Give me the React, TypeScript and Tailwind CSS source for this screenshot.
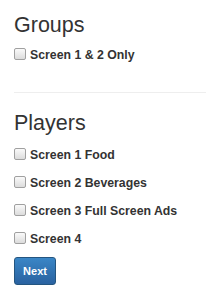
import React from "react";

function Check({ label }: { label: string }) {
  return (
    <label className="flex h-[20px] items-start">
      <span className="mt-[3px] box-border h-[12px] w-[12px] shrink-0 rounded-[2px] border border-[#a0a0a0] bg-gradient-to-b from-[#fafafa] to-[#dcdcdc]" />
      <span className="ml-[4px] text-[12.3px] font-bold leading-[20px] text-[#333]">{label}</span>
    </label>
  );
}

export default function App() {
  return (
    <div
      className="min-h-[301px] w-[206px] overflow-hidden bg-white pl-[14px] text-[#333]"
      style={{ fontFamily: '"Liberation Sans", Arial, sans-serif' }}
    >
      <h3 className="mt-[13px] text-[21.5px] font-normal leading-[24px]">Groups</h3>
      <div className="mt-[8px]">
        <Check label="Screen 1 & 2 Only" />
      </div>
      <hr className="mt-[27px] border-0 border-t border-[#eee]" />
      <h3 className="mt-[18px] text-[21.5px] font-normal leading-[24px]">Players</h3>
      <div className="mt-[10px] flex flex-col gap-[8px]">
        <Check label="Screen 1 Food" />
        <Check label="Screen 2 Beverages" />
        <Check label="Screen 3 Full Screen Ads" />
        <Check label="Screen 4" />
      </div>
      <button className="mt-[8px] box-border flex h-[28px] w-[42px] items-center justify-center rounded-[3px] border border-[#245580] bg-gradient-to-b from-[#3a86c6] to-[#2a62a0] text-[11px] font-bold text-white">
        Next
      </button>
    </div>
  );
}
